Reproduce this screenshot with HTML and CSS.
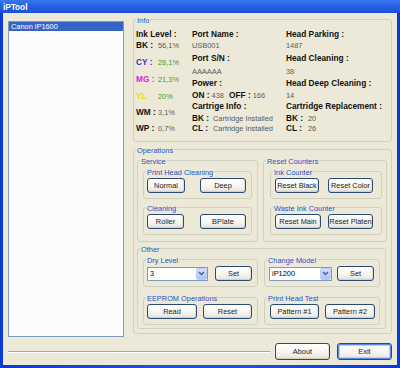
FILE: index.html
```html
<!DOCTYPE html>
<html>
<head>
<meta charset="utf-8">
<title>iPTool</title>
<link rel="stylesheet" href="styles.css">
</head>
<body>
<div class="window">
  <div class="titlebar"><span class="title">iPTool</span></div>
  <div class="frame">
    <div class="client">
      <div class="main">
        <div class="listbox">
          <div class="item sel">Canon iP1600</div>
        </div>
        <div class="panel">
          <fieldset class="gb info">
            <legend>Info</legend>
            <div class="info-body">
              <div class="col col1">
                <div><b>Ink Level :</b></div>
                <div><b class="k1">BK :</b><span class="v">56,1%</span></div>
                <div><b class="k1 cy">CY :</b><span class="v g">28,1%</span></div>
                <div><b class="k1 mg">MG :</b><span class="v g">21,3%</span></div>
                <div><b class="k1 yl">YL</b><span class="v g">20%</span></div>
                <div><b class="k1">WM :</b><span class="v">3,1%</span></div>
                <div><b class="k1">WP :</b><span class="v">0,7%</span></div>
              </div>
              <div class="col col2">
                <div><b>Port Name :</b></div>
                <div><span class="v">USB001</span></div>
                <div><b>Port S/N :</b></div>
                <div><span class="v">AAAAAA</span></div>
                <div><b>Power :</b></div>
                <div><b>ON :</b> <span class="v">438</span> <b class="off">OFF :</b> <span class="v">166</span></div>
                <div><b>Cartrige Info :</b></div>
                <div><b class="k2">BK :</b><span class="v">Cartridge Installed</span></div>
                <div><b class="k2">CL :</b><span class="v">Cartridge Installed</span></div>
              </div>
              <div class="col col3">
                <div><b>Head Parking :</b></div>
                <div><span class="v">1487</span></div>
                <div><b>Head Cleaning :</b></div>
                <div><span class="v">38</span></div>
                <div><b>Head Deep Cleaning :</b></div>
                <div><span class="v">14</span></div>
                <div><b>Cartridge Replacement :</b></div>
                <div><b class="k3">BK :</b><span class="v">20</span></div>
                <div><b class="k3">CL :</b><span class="v">26</span></div>
              </div>
            </div>
          </fieldset>

          <fieldset class="gb ops">
            <legend>Operations</legend>
            <div class="ops-body">
              <div class="ops-row">
                <fieldset class="gb service">
                  <legend>Service</legend>
                  <div class="sec-body">
                    <fieldset class="gb sub">
                      <legend>Print Head Cleaning</legend>
                      <div class="btns pad3">
                        <button class="btn w38">Normal</button>
                        <button class="btn w46 ml15">Deep</button>
                      </div>
                    </fieldset>
                    <fieldset class="gb sub mt3">
                      <legend>Cleaning</legend>
                      <div class="btns pad3">
                        <button class="btn w37">Roller</button>
                        <button class="btn w46 ml16">BPlate</button>
                      </div>
                    </fieldset>
                  </div>
                </fieldset>
                <fieldset class="gb counters">
                  <legend>Reset Counters</legend>
                  <div class="sec-body">
                    <fieldset class="gb sub">
                      <legend>Ink Counter</legend>
                      <div class="btns pad4">
                        <button class="btn w44">Reset Black</button>
                        <button class="btn w45 ml9">Reset Color</button>
                      </div>
                    </fieldset>
                    <fieldset class="gb sub mt3">
                      <legend>Waste Ink Counter</legend>
                      <div class="btns pad4">
                        <button class="btn w46">Reset Main</button>
                        <button class="btn w45 ml7">Reset Platen</button>
                      </div>
                    </fieldset>
                  </div>
                </fieldset>
              </div>

              <fieldset class="gb other">
                <legend>Other</legend>
                <div class="other-body">
                  <div class="other-col">
                    <fieldset class="gb sub2">
                      <legend>Dry Level</legend>
                      <div class="btns pad3 row15">
                        <div class="combo w61"><span>3</span><span class="arrow"><svg width="7" height="5" viewBox="0 0 7 5"><path d="M1 1 L3.5 3.5 L6 1" fill="none" stroke="#4d6185" stroke-width="1.5"/></svg></span></div>
                        <button class="btn w37 ml7">Set</button>
                      </div>
                    </fieldset>
                    <fieldset class="gb sub2 mt5">
                      <legend>EEPROM Operations</legend>
                      <div class="btns pad3">
                        <button class="btn w50">Read</button>
                        <button class="btn w49 ml6">Reset</button>
                      </div>
                    </fieldset>
                  </div>
                  <div class="other-col">
                    <fieldset class="gb sub2">
                      <legend>Change Model</legend>
                      <div class="btns pad4 row15">
                        <div class="combo w63"><span>iP1200</span><span class="arrow"><svg width="7" height="5" viewBox="0 0 7 5"><path d="M1 1 L3.5 3.5 L6 1" fill="none" stroke="#4d6185" stroke-width="1.5"/></svg></span></div>
                        <button class="btn w37 ml5">Set</button>
                      </div>
                    </fieldset>
                    <fieldset class="gb sub2 mt5">
                      <legend>Print Head Test</legend>
                      <div class="btns pad5">
                        <button class="btn w49">Pattern #1</button>
                        <button class="btn w50 ml6">Pattern #2</button>
                      </div>
                    </fieldset>
                  </div>
                </div>
              </fieldset>
            </div>
          </fieldset>
        </div>
      </div>
      <div class="footer">
        <div class="sep"></div>
        <button class="btn fbtn">About</button>
        <button class="btn fbtn default">Exit</button>
      </div>
    </div>
  </div>
</div>
</body>
</html>
```

FILE: styles.css
```css
* { box-sizing: border-box; }
html, body { margin: 0; padding: 0; }
body {
  width: 400px;
  height: 368px;
  overflow: hidden;
  font-family: "Liberation Sans", Arial, sans-serif;
  font-size: 7.4px;
  color: #000;
}
.window {
  width: 400px;
  height: 368px;
  display: flex;
  flex-direction: column;
}
.titlebar {
  height: 13px;
  flex: none;
  background: linear-gradient(#3b78ee, #2660e4 45%, #1d56dd 85%, #1a4cd0);
  padding-left: 3px;
}
.title {
  color: #fff;
  font-weight: bold;
  font-size: 8.4px;
  line-height: 14px;
  letter-spacing: -0.1px;
}
.frame {
  flex: 1;
  background: linear-gradient(90deg, #0a3bd4, #1a52e0 40%, #1a52e0 60%, #0a3bd4);
  padding: 0 3px 3px 3px;
  display: flex;
}
.client {
  flex: 1;
  background: #ece9d8;
  display: flex;
  flex-direction: column;
  padding: 0 5px 5px 5px;
}
.main {
  display: flex;
  align-items: flex-start;
}
.listbox {
  width: 116px;
  height: 316px;
  margin-top: 8px;
  border: 1px solid #7f9db9;
  background: #fcfcfc;
}
.item {
  height: 9px;
  line-height: 9px;
  padding-left: 2px;
}
.item.sel {
  background: #3563c6;
  color: #fff;
}
.panel {
  margin-left: 9px;
  margin-top: 1px;
  width: 259px;
}

/* group boxes */
.gb {
  margin: 0;
  padding: 0;
  min-width: 0;
  border: 1px solid #d0d0bf;
  border-radius: 3px;
}
.gb > legend {
  margin-left: 2px;
  padding: 2px 1px 0 1px;
  line-height: 9px;
  color: #2552c4;
  font-size: 7.4px;
}

/* info */
.info-body {
  display: flex;
  padding: 4px 0 7px 2px;
}
.col { display: grid; line-height: 11px; white-space: nowrap; }
.col1 { width: 56px; grid-template-rows: 11px 17px 17px 17px 16px 16px 11px; }
.col2 { width: 94px; grid-template-rows: 11px 13px 13px 12px 12px 11px 12px 10px 11px; }
.col3 { grid-template-rows: 11px 13px 13px 12px 12px 11px 12px 10px 11px; }
.col b { font-size: 8.3px; font-weight: bold; color: #111; }
.v { color: #5a5a5a; }
.v.g { color: #3f9b3f; }
.k1 { display: inline-block; width: 22px; }
.k2 { display: inline-block; width: 21px; }
.k3 { display: inline-block; width: 22px; }
.col b.cy { color: #3535c2; }
.col b.mg { color: #dd1fd6; }
.col b.yl { color: #e2e000; }
.off { margin-left: 3px; }

/* operations */
.ops { margin-top: 2px; }
.ops-body { padding: 0 4px 4px 3px; }
.ops-row { display: flex; justify-content: space-between; }
.service { width: 121px; }
.counters { width: 124px; }
.sec-body { padding: 0 5px 6px 5px; }
.counters .sec-body { padding: 0 4px 6px 6px; }
.sub .btns { padding-top: 1px; padding-bottom: 5px; }
.mt3 { margin-top: 3px; }
.mt5 { margin-top: 5px; }

.other { margin-top: 1px; margin-right: 1px; }
.other-body {
  display: flex;
  gap: 6px;
  padding: 0 5px 3px 5px;
}
.other-col { flex: 1; min-width: 0; }
.other-col:first-child { flex: 0 0 115px; }
.sub2 .btns { padding-top: 1px; padding-bottom: 5px; }

.btns { display: flex; align-items: center; }
.pad3 { padding-left: 3px; }
.pad4 { padding-left: 4px; }
.pad5 { padding-left: 5px; }
.row15 { height: 21px; }

.btn {
  font-family: inherit;
  font-size: 7.4px;
  color: #1a1a1a;
  height: 15px;
  padding: 0;
  border: 1px solid #2b4a72;
  border-radius: 3px;
  background: linear-gradient(#ffffff, #f6f5f1 55%, #ebe9e1 85%, #d9d5c8);
  box-shadow: inset 0 -1px 0 #d6d0c3, inset -1px 0 0 #e4e0d6;
  flex: none;
}
.w37 { width: 37px; }
.w38 { width: 38px; }
.w44 { width: 44px; }
.w45 { width: 45px; }
.w46 { width: 46px; }
.w49 { width: 49px; }
.w50 { width: 50px; }
.ml5 { margin-left: 5px; }
.ml6 { margin-left: 6px; }
.ml7 { margin-left: 7px; }
.ml9 { margin-left: 9px; }
.ml15 { margin-left: 15px; }
.ml16 { margin-left: 16px; }

.combo {
  height: 14px;
  border: 1px solid #7f9db9;
  background: #fff;
  display: flex;
  align-items: center;
  flex: none;
}
.w61 { width: 61px; }
.w63 { width: 63px; }
.combo > span:first-child { flex: 1; padding-left: 2px; line-height: 12px; }
.arrow {
  width: 11px;
  height: 12px;
  border: 1px solid #b9cbf5;
  border-radius: 2px;
  background: linear-gradient(#d4e1fe, #bccffa 60%, #aec4f6);
  display: flex;
  align-items: center;
  justify-content: center;
}
.arrow svg { display: block; }

/* footer */
.footer {
  margin-top: 6px;
  display: flex;
  align-items: center;
  height: 17px;
}
.sep {
  flex: 1;
  height: 2px;
  border-top: 1px solid #aca899;
  border-bottom: 1px solid #ffffff;
  margin-top: 1px;
}
.fbtn {
  width: 55px;
  height: 17px;
  margin-left: 5px;
}
.fbtn.default {
  margin-left: 7px;
  box-shadow: inset 0 0 0 1px #5b8ae6, inset 0 0 0 2px #b8cff8;
}
```
